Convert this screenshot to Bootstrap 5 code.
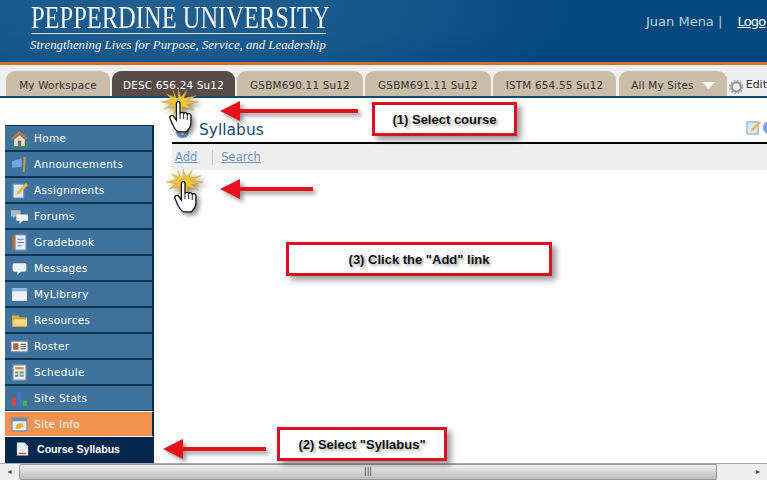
<!DOCTYPE html>
<html lang="en"><head><meta charset="utf-8"><title>Syllabus</title>
<link href="https://cdn.jsdelivr.net/npm/bootstrap@5.3.0/dist/css/bootstrap.min.css" rel="stylesheet">
<style>
html,body{height:480px;overflow:hidden;background:#fff}
body{width:767px;position:relative;font-family:"DejaVu Sans",sans-serif}
.hdr{height:62px;background:radial-gradient(ellipse 420px 110px at 170px 10px,#245f8e 0,#14568a 55%,#00487d 100%);position:relative;white-space:nowrap;overflow:hidden}
.brand{padding:3px 0 0 31px;width:340px;flex:none;color:#f2f5f7;font-family:"Liberation Serif",serif}
.brandname{border-bottom:1px solid #d8e4ec;width:295px;height:31px;line-height:30px;font-size:31px}
.brandname span{display:inline-block;transform:scaleX(.79);transform-origin:0 0;white-space:nowrap}
.tagl{font-style:italic;font-size:12.8px;line-height:16px;margin-top:3px;margin-left:-1px;white-space:nowrap}
.who{color:#c3d0da;font-size:13px;line-height:17px;padding-top:13px;margin-left:306px;white-space:nowrap}
.who a{color:#fff;margin-left:11px;letter-spacing:-.8px}
.orange{height:3px;background:#cd6f36}
.tabband{height:33px;background:#efefef;border-bottom:2px solid #104a72;padding:6px 0 0 6px;white-space:nowrap;overflow:hidden}
.tabi{height:25px;background:#cbbea8;border-radius:9px 9px 0 0;font-size:10.4px;letter-spacing:.2px;line-height:29px;text-align:center;color:#333;margin-right:2px;flex:none}
.tabi.on{background:#594b49;color:#fff}
.tabi.sites{width:108px;line-height:1;margin-left:1px;padding-top:4px}
.editl{font-size:11px;line-height:28px;color:#333;margin-left:2px}
.mainrow{height:365px;overflow:hidden}
.side{width:172px;flex:none;padding:27px 0 0 5px}
.sitem{width:149px;height:26px;background:#3f729c;border-top:1px solid #0c3553;border-right:2px solid #0c2b44;border-bottom:1px solid #0c3553;color:#fff;font-size:10.5px;letter-spacing:.3px;display:flex;align-items:center;padding:1px 0 0 6px;gap:6px;white-space:nowrap}
.sitem svg{width:17px;height:17px;flex:none}
.sitem.act{background:#f09350;border-color:#f9f9f9 #0c2b44 #f9f9f9 #fff}
.sitem.cur{background:#03274d;border:0;font:700 10.6px "Liberation Sans",sans-serif;letter-spacing:0;padding:0 0 2px 10px;gap:7px}
.sitem.cur svg{width:15px;height:16px}
.cont{flex:1;min-width:0;overflow:hidden}
.ttl{height:46px;padding:23px 0 0 3px;font-size:15.5px;line-height:19px;color:#164a72;border-bottom:2px solid #000;position:relative;display:flex;gap:9px}
.ttl>svg{flex:none;margin-top:3px}
.tool{height:26px;background:#eee;font-size:11.5px;line-height:26px;padding-left:3px}
.tool a{color:#6a94c6}
.tool i{display:inline-block;width:1px;height:15px;background:#ccc;vertical-align:middle;margin:0 8px 0 15px}
.ticons{position:absolute;right:-10px;top:22px;display:flex;gap:1px}
.hscroll{height:17px;background:#efefef;border-top:1px solid #aaa;position:relative}
.scar{width:19px;flex:none;text-align:center;color:#555;font-size:8px;line-height:16px}
.thumb{flex:1;background:linear-gradient(#f0f0f0,#bdbdbd);border:1px solid #999;border-radius:3px 0 0 3px;text-align:center;font-size:8px;line-height:13px;color:#333}
.scar.rgt{width:50px;padding-left:32px}
.callout{position:absolute;background:#fff;border:3px solid #dc1020;box-shadow:4px 4px 6px rgba(70,70,70,.55);font:700 13px "Liberation Sans",sans-serif;color:#111;text-shadow:2px 2px 3px rgba(0,0,0,.35);display:flex;align-items:center;justify-content:center;padding-top:1px}
.over{position:absolute;overflow:visible;filter:drop-shadow(3px 3px 2px rgba(60,60,60,.55))}
</style></head><body>
<svg width="0" height="0" class="position-absolute"><defs>
<symbol id="hand" viewBox="-10 -6 44 52">
<polygon fill="#f2c43a" stroke="#c89a1a" stroke-width=".5" points="10,10 10,-4 13,5 20,-3 16,6 30,3 19,9 32,10 19,13 27,19 15,15 14,24 10,17 5,24 6,15 -6,18 3,12 -9,10 3,7 -3,1 6,5 4,-3"/>
<path fill="#fff" stroke="#111" stroke-width="1.400" d="M8 12c0-3 4-3 4 0v11c1-2 4-2 4 0 1-2 4-1 4 1 1-2 4-1 4 1v8c0 5-3 8-5 10h-9c-3-2-4-3-6-8l-3-7c-1-3 3-4 4-2l3 4z"/>
<path stroke="#111" stroke-width="1" fill="none" d="M12 23v6M16 23v6M20 24v6"/>
</symbol>
</defs></svg>

<div class="hdr d-flex">
  <div class="brand"><div class="brandname"><span>PEPPERDINE UNIVERSITY</span></div><div class="tagl">Strengthening Lives for Purpose, Service, and Leadership</div></div>
  <div class="who">Juan Mena | <a href="#">Logo</a></div>
</div>
<div class="orange"></div>
<div class="tabband d-flex">
  <div class="tabi" style="width:104px">My Workspace</div>
  <div class="tabi on" style="width:123px">DESC 656.24 Su12</div>
  <div class="tabi" style="width:126px">GSBM690.11 Su12</div>
  <div class="tabi" style="width:126px">GSBM691.11 Su12</div>
  <div class="tabi" style="width:123px">ISTM 654.55 Su12</div>
  <div class="tabi sites d-flex align-items-center justify-content-center gap-2">All My Sites <svg width="13" height="7" viewBox="0 0 13 7"><path fill="#fff" d="M0 0h13L6.500 7z"/></svg></div>
  <svg width="16" height="16" viewBox="0 0 16 16" class="ms-0 mt-2 flex-none"><circle cx="8" cy="8" r="5" fill="none" stroke="#999" stroke-width="2.600"/><circle cx="8" cy="8" r="7" fill="none" stroke="#aaa" stroke-width="1.600" stroke-dasharray="2 1.650"/></svg>
  <div class="editl">Edit</div>
</div>
<div class="mainrow d-flex">
  <div class="side">
    <div class="sitem"><svg viewBox="0 0 16 16"><path fill="#3f8a4a" d="M1 14h14v2H1z"/><path fill="#c8752e" d="M8 1 0 8l2 1 6-5 6 5 2-1z"/><path fill="#e8dcc0" d="M3 9l5-4 5 4v6H3z"/><path fill="#666" d="M6.500 10h3v5h-3z"/></svg>Home</div>
    <div class="sitem"><svg viewBox="0 0 16 16"><path fill="#6fa8e8" d="M1 5l9-3v8l-9 1z"/><path fill="#c99a3a" d="M12 1h2l-1 14h-2z"/></svg>Announcements</div>
    <div class="sitem"><svg viewBox="0 0 16 16"><path fill="#dbe8f6" stroke="#6b9ad0" d="M2 2h10v13H2z"/><path fill="#f0b840" d="M14 1l2 2-8 8-3 1 1-3z"/></svg>Assignments</div>
    <div class="sitem"><svg viewBox="0 0 16 16"><path fill="#a9bccb" d="M0 2h9v6H4L2 10V8H0z"/><path fill="#f2f5f8" d="M5 6h11v6h-5l-3 3v-3H5z"/></svg>Forums</div>
    <div class="sitem"><svg viewBox="0 0 16 16"><path fill="#c0662a" d="M1 1h3v14H1z"/><path fill="#e8eef8" stroke="#8aa0c0" d="M4 1h10v14H4z"/><path stroke="#5a86c0" d="M6 5h6M6 8h6M6 11h4"/></svg>Gradebook</div>
    <div class="sitem"><svg viewBox="0 0 16 16"><path fill="#eef2f6" d="M3 3h10q1.500 0 1.500 2v4q0 2-1.500 2H9l-3 3v-3H3Q1.500 11 1.500 9V5Q1.500 3 3 3z"/></svg>Messages</div>
    <div class="sitem"><svg viewBox="0 0 16 16"><path fill="#eef3f8" d="M1 2h14v12H1z"/><path fill="#8fb2d4" d="M1 2h14v3H1z"/></svg>MyLibrary</div>
    <div class="sitem"><svg viewBox="0 0 16 16"><path fill="#d9a63a" d="M1 3h6l1 2h7v9H1z"/><path fill="#f7dc80" d="M2 7h13v6H2z"/></svg>Resources</div>
    <div class="sitem"><svg viewBox="0 0 16 16"><path fill="#eef2f6" stroke="#88a" d="M0 3h16v10H0z"/><path fill="#b0683a" d="M2 5h5v6H2z"/><path stroke="#667" d="M9 6h5M9 8h5M9 10h5"/></svg>Roster</div>
    <div class="sitem"><svg viewBox="0 0 16 16"><path fill="#e8eef4" stroke="#99a" d="M2 1h12v14H2z"/><path fill="#e08040" d="M4 3h8v2H4z"/><path fill="#6a9a60" d="M4 7h3v2H4zM8 7h4v2H8zM4 10h3v2H4z"/><path fill="#6c94c8" d="M8 10h4v2H8z"/></svg>Schedule</div>
    <div class="sitem"><svg viewBox="0 0 16 16"><path fill="#d8403a" d="M1 7h4v8H1z"/><path fill="#4a72d0" d="M6 2h4v13H6z"/><path fill="#50b050" d="M11 10h4v5h-4z"/></svg>Site Stats</div>
    <div class="sitem act"><svg viewBox="0 0 16 16"><path fill="#eef3f8" stroke="#6a8cb0" d="M1 2h14v12H1z"/><path fill="#6a8cb0" d="M1 2h14v3H1z"/><path fill="#e0b030" d="M4 12l2-5h6l-1 2h2l-5 3z"/></svg>Site Info</div>
    <div class="sitem cur"><svg viewBox="0 0 16 16"><path fill="#e8eef6" d="M2 1h8l4 4v10H2z"/><path fill="#c8dcec" d="M10 1l4 4h-4z"/><path fill="#d84a4a" d="M4 12h8v1.500H4z"/></svg>Course Syllabus</div>
  </div>
  <div class="cont">
    <div class="ttl"><svg width="15" height="15" viewBox="0 0 16 16"><circle cx="8" cy="8" r="7" fill="#6b8fd0"/><path fill="#fff" d="M4 6h8l-4 6z"/></svg>Syllabus
      <div class="ticons"><svg width="15" height="15" viewBox="0 0 16 16"><path fill="#dbe8f6" stroke="#6b9ad0" d="M1 2h12v13H1z"/><path fill="#f0b840" d="M15 1l1 2-8 8-3 1 1-3z"/></svg><svg width="15" height="15" viewBox="0 0 16 16"><circle cx="8" cy="8" r="7" fill="#7ea6dc"/></svg></div>
    </div>
    <div class="tool"><a href="#">Add</a><i></i><a href="#">Search</a></div>
  </div>
</div>
<div class="hscroll d-flex">
  <div class="scar">◂</div><div class="thumb">|||</div><div class="scar rgt">▸</div>
</div>

<svg class="over" style="left:160px;top:87px" width="40" height="48"><use href="#hand" width="40" height="48"/></svg>
<svg class="over" style="left:165px;top:167px" width="40" height="48"><use href="#hand" width="40" height="48"/></svg>
<svg class="over" style="left:220px;top:100px" width="138" height="22"><path fill="#e8101c" d="M0 11 20 1v8h118v4H20v8z"/></svg>
<svg class="over" style="left:220px;top:178px" width="93" height="22"><path fill="#e8101c" d="M0 11 20 1v8h73v4H20v8z"/></svg>
<svg class="over" style="left:163px;top:439px" width="103" height="22"><path fill="#e8101c" d="M0 10 20 0v8h83v4H20v8z"/></svg>
<div class="callout" style="left:372px;top:102px;width:145px;height:34px">(1) Select course</div>
<div class="callout" style="left:286px;top:242px;width:266px;height:34px">(3) Click the "Add" link</div>
<div class="callout" style="left:277px;top:427px;width:170px;height:34px">(2) Select "Syllabus"</div>
</body></html>
